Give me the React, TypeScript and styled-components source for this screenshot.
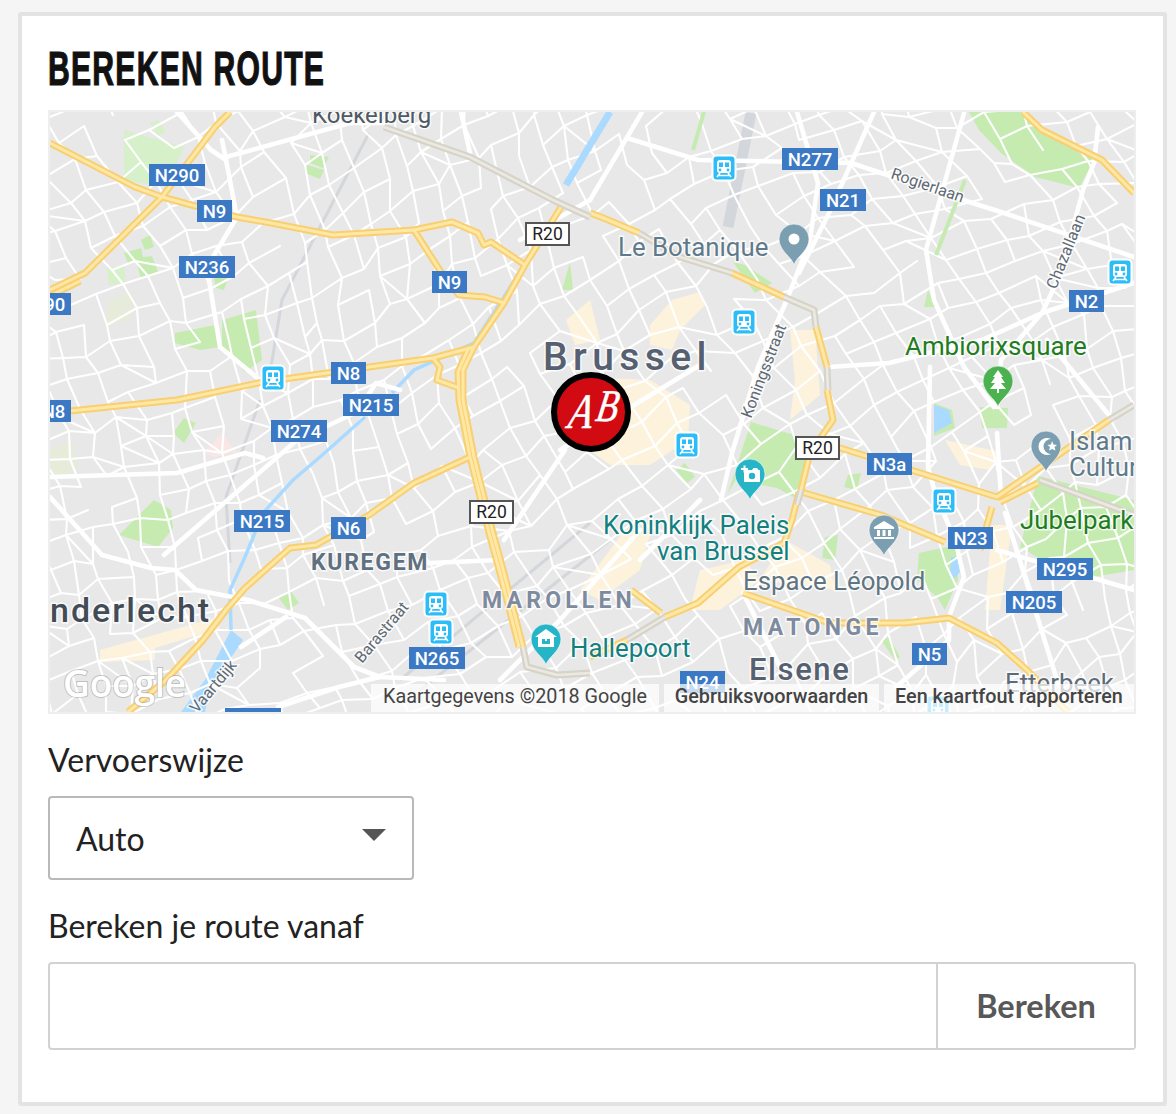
import React from "react";
import styled, { createGlobalStyle } from "styled-components";

const Global = createGlobalStyle`
  html, body { margin: 0; padding: 0; background: #f5f5f5; }
  body { font-family: Lato, "Liberation Sans", sans-serif; color: #222; }
`;

const Page = styled.div`
  width: 1176px;
  height: 1114px;
  padding: 12px 9px 8px 18px;
  box-sizing: border-box;
`;
const Card = styled.section`
  height: 1094px;
  box-sizing: border-box;
  background: #fff;
  border: 4px solid #e3e3e3;
  border-radius: 3px;
  padding: 0 27px 0 26px;
`;
const Title = styled.h2`
  margin: 0;
  height: 94px;
  box-sizing: border-box;
  padding-top: 24px;
  font-family: "Liberation Sans", sans-serif;
  font-weight: 700;
  font-size: 49px;
  line-height: 56px;
  letter-spacing: 2px;
  color: #111;
  -webkit-text-stroke: 1.2px #111;
  white-space: nowrap;
  transform: scaleX(0.615);
  transform-origin: left center;
`;
const MapFrame = styled.div`
  position: relative;
  width: 1088px;
  height: 604px;
  box-sizing: border-box;
  border: 2px solid #eee;
  overflow: hidden;
  background: #e8e8e8;
`;
const MapDrawing = styled.svg`
  display: block;
  width: 1084px;
  height: 600px;
`;
const Attribution = styled.div`
  position: absolute;
  right: 0;
  bottom: 0;
  display: flex;
  gap: 5px;
  height: 28px;
  font-family: Roboto, sans-serif;
  font-size: 19.8px;
  line-height: 26px;
  color: #444;
`;
const AttrItem = styled.span<{ $bold?: boolean; $w: number }>`
  width: ${(p) => p.$w}px;
  box-sizing: border-box;
  text-align: center;
  background: rgba(255, 255, 255, 0.72);
  font-weight: ${(p) => (p.$bold ? 500 : 400)};
  white-space: nowrap;
`;
const FieldLabel = styled.label`
  display: block;
  font-size: 32px;
  line-height: 36px;
  color: #222;
`;
const ModeLabel = styled(FieldLabel)`
  margin: 28px 0 18px;
`;
const FromLabel = styled(FieldLabel)`
  margin: 28px 0 18px;
`;
const SelectBox = styled.div`
  width: 366px;
  height: 84px;
  box-sizing: border-box;
  border: 2px solid #b9b9b9;
  border-radius: 4px;
  padding: 0 26px 0 26px;
  display: flex;
  align-items: center;
  justify-content: space-between;
  font-size: 32px;
  color: #222;
`;
const Caret = styled.span`
  width: 0;
  height: 0;
  margin-bottom: 6px;
  border-left: 12px solid transparent;
  border-right: 12px solid transparent;
  border-top: 12px solid #555;
`;
const InputGroup = styled.div`
  display: flex;
  width: 1088px;
  height: 88px;
  box-sizing: border-box;
  border: 2px solid #d2d2d2;
  border-radius: 4px;
`;
const RouteInput = styled.input`
  flex: 1;
  min-width: 0;
  border: 0;
  outline: 0;
  background: transparent;
`;
const RouteButton = styled.button`
  width: 198px;
  border: 0;
  border-left: 2px solid #d2d2d2;
  background: #fff;
  font-family: Lato, sans-serif;
  font-size: 32.5px;
  font-weight: 700;
  color: #585858;
  padding: 0;
  line-height: 84px;
`;

const Label = styled.text<{ $c: string; $s: number; $w?: number; $ls?: number }>`
  font-family: Roboto, sans-serif;
  fill: ${(p) => p.$c};
  font-size: ${(p) => p.$s}px;
  font-weight: ${(p) => p.$w ?? 400};
  letter-spacing: ${(p) => p.$ls ?? 0}px;
  stroke: rgba(255, 255, 255, 0.75);
  stroke-width: 3px;
  paint-order: stroke;
`;
const ShieldText = styled.text`
  font-family: Roboto, sans-serif;
  font-size: 18.5px;
  font-weight: 500;
  fill: #fff;
  text-anchor: middle;
`;
const RouteText = styled.text`
  font-family: Roboto, sans-serif;
  font-size: 17.5px;
  fill: #222;
  text-anchor: middle;
`;
const LogoText = styled.text`
  font-family: "Open Sans", sans-serif;
  font-size: 37px;
  font-weight: 600;
  fill: #fff;
  stroke: rgba(90, 90, 90, 0.3);
  stroke-width: 2px;
  paint-order: stroke;
  letter-spacing: -0.2px;
`;
const BadgeLetter = styled.text<{ $s: number }>`
  font-family: "Liberation Serif", serif;
  font-style: italic;
  font-size: ${(p) => p.$s}px;
  fill: #fff;
  stroke: #fff;
  stroke-width: 0.5px;
`;

type P = [number, number][];
const d = (p: P) => "M" + p.map((q) => q.join(" ")).join("L");

function buildStreets() {
  let s = 987654;
  const r = () => {
    s = (s * 16807) % 2147483647;
    return s / 2147483647;
  };
  const c = 27;
  const rot = -0.42;
  const ca = Math.cos(rot);
  const sa = Math.sin(rot);
  const nodes: [number, number][][] = [];
  for (let i = -22; i < 50; i++) {
    const row: [number, number][] = [];
    for (let j = -22; j < 50; j++) {
      const x0 = 590 + (i - 14) * c;
      const y0 = 410 + (j - 14) * c;
      const wx = x0 + 26 * Math.sin(y0 / 130 + x0 / 280);
      const wy = y0 + 26 * Math.sin(x0 / 150 - y0 / 380);
      const dx = wx - 590;
      const dy = wy - 410;
      row.push([
        Math.round(590 + dx * ca - dy * sa + (r() - 0.5) * 13),
        Math.round(410 + dx * sa + dy * ca + (r() - 0.5) * 13),
      ]);
    }
    nodes.push(row);
  }
  let out = "";
  const seg = (a: [number, number], b: [number, number]) => {
    const inside = (q: [number, number]) => q[0] > 20 && q[0] < 1160 && q[1] > 90 && q[1] < 740;
    if (inside(a) || inside(b)) out += `M${a[0]} ${a[1]}L${b[0]} ${b[1]}`;
  };
  for (let i = 0; i < nodes.length; i++) {
    for (let j = 0; j < nodes[i].length; j++) {
      if (i + 1 < nodes.length && r() < 0.84) seg(nodes[i][j], nodes[i + 1][j]);
      if (j + 1 < nodes[i].length && r() < 0.84) seg(nodes[i][j], nodes[i][j + 1]);
      if (i + 1 < nodes.length && j + 1 < nodes[i].length && r() < 0.08)
        seg(nodes[i][j], nodes[i + 1][j + 1]);
    }
  }
  return out;
}
const streets = buildStreets();

const beige: P[] = [
  [[600, 378], [650, 380], [690, 405], [688, 440], [650, 465], [610, 465], [590, 450]],
  [[650, 325], [672, 300], [700, 292], [705, 305], [680, 330], [672, 350], [650, 345]],
  [[566, 320], [590, 300], [600, 340], [575, 345]],
  [[625, 530], [650, 535], [640, 570], [600, 600], [580, 590]],
  [[700, 570], [745, 560], [760, 580], [720, 610], [690, 610]],
  [[790, 330], [815, 330], [820, 395], [790, 420], [795, 380]],
  [[945, 440], [1000, 452], [990, 470], [960, 465]],
  [[992, 525], [1012, 525], [1000, 610], [985, 610]],
  [[785, 540], [830, 565], [835, 590], [760, 580]],
  [[100, 650], [215, 618], [220, 628], [155, 648], [155, 660], [100, 662]],
];
const paleParks: P[] = [
  [[124, 130], [184, 147], [166, 187], [124, 180]],
  [[150, 123], [158, 120], [166, 132], [158, 136]],
  [[107, 267], [124, 267], [126, 283], [109, 285]],
];
const parks: P[] = [
  [[310, 155], [329, 157], [323, 168], [310, 163]],
  [[307, 165], [324, 170], [320, 179], [305, 173]],
  [[222, 320], [256, 310], [262, 360], [245, 372], [222, 347]],
  [[175, 333], [215, 325], [220, 347], [200, 350], [175, 343]],
  [[124, 253], [141, 248], [143, 257], [128, 263]],
  [[135, 258], [152, 256], [158, 272], [141, 278]],
  [[141, 240], [150, 235], [154, 247], [145, 250]],
  [[119, 535], [154, 500], [171, 510], [173, 528], [158, 547]],
  [[173, 433], [184, 418], [196, 423], [184, 443]],
  [[278, 597], [290, 590], [299, 603], [288, 610]],
  [[214, 278], [230, 272], [224, 290], [216, 288]],
  [[969, 112], [1023, 112], [1046, 133], [1094, 160], [1079, 188], [1035, 177], [1001, 153], [979, 130]],
  [[751, 422], [810, 440], [799, 500], [777, 488], [736, 480], [728, 493]],
  [[928, 290], [935, 307], [924, 307]],
  [[980, 407], [1008, 408], [1007, 428], [982, 428]],
  [[934, 403], [952, 410], [955, 428], [934, 436]],
  [[1038, 476], [1134, 500], [1134, 570], [1076, 580], [1020, 547]],
  [[919, 553], [956, 545], [958, 580], [945, 610], [937, 597], [917, 580]],
  [[825, 537], [838, 535], [835, 560], [822, 558]],
  [[881, 640], [889, 637], [900, 657], [895, 660]],
  [[848, 475], [861, 473], [857, 490], [844, 487]],
  [[676, 470], [685, 463], [695, 477], [687, 483]],
  [[562, 290], [570, 262], [573, 290]],
  [[733, 262], [745, 265], [772, 283], [755, 293]],
];
const greenStrips: P[] = [
  [[704, 112], [693, 150]],
  [[965, 180], [936, 255]],
];
const water: P[] = [
  [[231, 630], [243, 640], [211, 687], [205, 712], [181, 712], [205, 680]],
  [[934, 405], [949, 410], [952, 423], [934, 433]],
  [[951, 557], [957, 557], [960, 572], [955, 578], [950, 575]],
];
const canal: P[] = [
  [[610, 112], [566, 185]],
  [[525, 263], [504, 297], [474, 343], [414, 370], [392, 393]],
  [[365, 417], [320, 457], [293, 480], [263, 513], [245, 557], [230, 590], [231, 630]],
];
const rails: P[] = [
  [[369, 133], [282, 300], [271, 367]],
  [[260, 400], [226, 497], [230, 563]],
  [[751, 113], [728, 227]],
  [[400, 680], [590, 523]],
  [[420, 690], [610, 540]],
];
const major: P[] = [
  [[222, 140], [226, 160], [237, 217], [213, 257], [209, 280], [220, 347], [260, 380]],
  [[461, 112], [470, 153]],
  [[226, 157], [350, 123], [384, 123]],
  [[177, 112], [211, 150], [226, 160]],
  [[590, 200], [642, 112]],
  [[627, 138], [698, 160], [851, 163], [963, 200], [1004, 213], [1134, 257]],
  [[797, 112], [818, 183], [810, 240], [788, 297], [758, 367], [732, 453], [721, 500]],
  [[874, 112], [829, 213], [799, 273]],
  [[964, 113], [949, 167], [926, 250], [934, 300], [964, 367], [994, 407]],
  [[1098, 127], [1094, 163], [1083, 190], [1061, 273], [1042, 313], [1001, 360], [997, 407]],
  [[1134, 283], [1042, 313], [982, 340], [889, 363], [829, 367]],
  [[1047, 340], [1113, 420]],
  [[930, 367], [928, 467], [937, 500]],
  [[997, 433], [1001, 497]],
  [[937, 497], [956, 543], [964, 577], [949, 617], [949, 640], [919, 667], [896, 687]],
  [[1005, 513], [1057, 680], [1068, 712]],
  [[997, 550], [1134, 590]],
  [[743, 593], [780, 667]],
  [[50, 497], [102, 555], [151, 568], [175, 570], [196, 590], [248, 600], [305, 618], [354, 667], [380, 677], [444, 680]],
  [[164, 555], [297, 440], [357, 412], [376, 383], [400, 390]],
  [[50, 477], [177, 473], [245, 453], [263, 458]],
  [[241, 647], [286, 617]],
  [[429, 563], [500, 560]],
  [[565, 450], [504, 540]],
  [[278, 707], [339, 687], [380, 677]],
  [[590, 200], [520, 240]],
  [[640, 530], [560, 620], [500, 680]],
  [[700, 500], [640, 560]],
  [[560, 450], [700, 365]],
];
const yellow: P[] = [
  [[50, 143], [135, 187], [162, 197], [199, 207], [237, 217], [271, 223], [333, 235], [414, 230]],
  [[414, 230], [452, 222], [478, 233], [484, 245], [491, 242], [525, 265]],
  [[414, 230], [448, 283], [459, 295], [485, 297], [504, 303]],
  [[561, 207], [525, 265], [504, 303], [474, 347], [463, 370], [463, 400]],
  [[469, 347], [458, 372], [459, 400], [470, 457], [489, 533], [500, 573], [519, 647]],
  [[463, 400], [474, 457], [493, 533], [504, 573], [523, 647]],
  [[230, 112], [215, 127], [162, 197], [85, 273], [50, 290]],
  [[80, 281], [50, 296]],
  [[50, 413], [177, 400], [263, 382], [433, 358], [474, 347]],
  [[433, 358], [440, 367], [437, 380], [459, 388]],
  [[470, 457], [414, 483], [369, 515], [316, 545], [290, 548], [245, 588], [226, 610], [203, 640], [166, 680], [128, 712]],
  [[590, 213], [601, 217], [639, 233]],
  [[732, 273], [784, 297]],
  [[816, 327], [827, 367]],
  [[827, 390], [833, 420], [810, 453], [801, 490]],
  [[801, 492], [881, 515], [945, 542]],
  [[837, 447], [911, 470], [997, 497], [1109, 420]],
  [[1000, 502], [1038, 483]],
  [[799, 492], [792, 520], [784, 543], [739, 567], [698, 603], [665, 617]],
  [[631, 590], [661, 613]],
  [[627, 640], [590, 657]],
  [[743, 593], [829, 623], [904, 623], [949, 618], [997, 643], [1027, 670], [1068, 712]],
  [[1023, 112], [1042, 130], [1102, 160], [1134, 193]],
  [[992, 507], [980, 550]],
];
const tunnels: P[] = [
  [[384, 127], [470, 157], [553, 200], [590, 217]],
  [[639, 233], [680, 257], [732, 273]],
  [[784, 297], [814, 310], [816, 327]],
  [[827, 367], [828, 390]],
  [[801, 490], [797, 505]],
  [[665, 617], [627, 640]],
  [[1109, 420], [1134, 405]],
  [[523, 647], [527, 667], [557, 675], [590, 673]],
  [[1040, 480], [1134, 515]],
];
const shields: [number, number, number, string][] = [
  [149, 164, 56, "N290"], [197, 200, 35, "N9"], [179, 256, 56, "N236"],
  [15, 293, 56, "N290"], [432, 271, 35, "N9"], [331, 362, 35, "N8"],
  [343, 394, 56, "N215"], [271, 420, 56, "N274"], [36, 400, 35, "N8"],
  [234, 510, 56, "N215"], [331, 517, 35, "N6"], [409, 647, 56, "N265"],
  [782, 148, 56, "N277"], [820, 189, 46, "N21"], [1069, 290, 35, "N2"],
  [867, 453, 45, "N3a"], [948, 527, 45, "N23"], [1037, 558, 56, "N295"],
  [1006, 591, 56, "N205"], [912, 643, 35, "N5"], [680, 671, 45, "N24"],
  [225, 708, 56, ""],
];
const routes: [number, number][] = [[525, 222], [795, 436], [469, 500]];
const trains: [number, number][] = [
  [273, 378], [724, 168], [744, 322], [1120, 272], [687, 445],
  [944, 501], [436, 604], [441, 632], [938, 708],
];

const Train = ({ x, y }: { x: number; y: number }) => (
  <g transform={`translate(${x} ${y})`}>
    <rect x={-11.5} y={-12.5} width={23} height={25} rx={4} fill="#2bbdf7" stroke="#fff" strokeWidth={2} />
    <rect x={-7} y={-8} width={14} height={13} rx={3} fill="#fff" />
    <rect x={-5} y={-5.5} width={4} height={4.5} fill="#2bbdf7" />
    <rect x={1} y={-5.5} width={4} height={4.5} fill="#2bbdf7" />
    <circle cx={-4} cy={2} r={1.4} fill="#2bbdf7" />
    <circle cx={4} cy={2} r={1.4} fill="#2bbdf7" />
    <path d="M-4 5L-7 9M4 5L7 9M-5.5 7.5H5.5" stroke="#fff" strokeWidth={1.6} fill="none" />
  </g>
);

const Pin = ({ x, y, fill, children }: { x: number; y: number; fill: string; children?: React.ReactNode }) => (
  <g transform={`translate(${x} ${y})`}>
    <path
      d="M0 26C-2 18-15 12-15 0A15 15 0 1 1 15 0C15 12 2 18 0 26Z"
      fill={fill}
      stroke="rgba(255,255,255,.6)"
      strokeWidth={1}
    />
    {children}
  </g>
);

const slate = "#7b9fb1";
const teal = "#26b4c7";

function BrusselsMap() {
  return (
    <MapDrawing viewBox="50 112 1084 600">
      <rect x={50} y={112} width={1084} height={600} fill="#e8e8e8" />
      {beige.map((p, i) => <path key={i} d={d(p) + "Z"} fill="#fdf3dd" />)}
      <path d="M203 453L222 433L237 452L215 457Z" fill="#f8e7e5" />
      <path d="M50 450L72 440L78 470L50 480ZM110 300L135 290L130 320L105 325Z" fill="#e6ecd9" />
      {paleParks.map((p, i) => <path key={i} d={d(p) + "Z"} fill="#d6f0c9" />)}
      {parks.map((p, i) => <path key={i} d={d(p) + "Z"} fill="#c5ebb1" />)}
      {water.map((p, i) => <path key={i} d={d(p) + "Z"} fill="#aadaff" />)}
      {rails.map((p, i) => <path key={i} d={d(p)} fill="none" stroke="#d3d6da" strokeWidth={i === 2 ? 11 : 3} />)}
      <path d={streets} fill="none" stroke="#fff" strokeWidth={2.1} strokeLinecap="round" />
      {greenStrips.map((p, i) => <path key={i} d={d(p)} fill="none" stroke="#c5ebb1" strokeWidth={4} />)}
      {canal.map((p, i) => <path key={i} d={d(p)} fill="none" stroke="#aadaff" strokeWidth={i === 0 ? 7 : 3.5} />)}
      {major.map((p, i) => <path key={i} d={d(p)} fill="none" stroke="#fff" strokeWidth={4.6} strokeLinejoin="round" strokeLinecap="round" />)}
      {yellow.map((p, i) => <path key={i} d={d(p)} fill="none" stroke="#f8cf73" strokeWidth={7} strokeLinejoin="round" />)}
      {yellow.map((p, i) => <path key={i} d={d(p)} fill="none" stroke="#fee8a3" strokeWidth={3} strokeLinejoin="round" />)}
      {tunnels.map((p, i) => <path key={i} d={d(p)} fill="none" stroke="#d6d3c8" strokeWidth={7} strokeLinejoin="round" />)}
      {tunnels.map((p, i) => <path key={i} d={d(p)} fill="none" stroke="#ebe9e2" strokeWidth={2.6} strokeLinejoin="round" />)}

      <Label x={312} y={123} $c="#4f5a64" $s={24}>Koekelberg</Label>
      <Label x={618} y={256} $c="#5f7b8b" $s={25.8}>Le Botanique</Label>
      <Label x={543} y={370} $c="#566070" $s={39} $w={500} $ls={5.4}>Brussel</Label>
      <Label x={905} y={355} $c="#1f7d1f" $s={25.9}>Ambiorixsquare</Label>
      <Label x={1069} y={450} $c="#5f7b8b" $s={25.8}>Islam</Label>
      <Label x={1069} y={476} $c="#5f7b8b" $s={25.8}>Cultur</Label>
      <Label x={603} y={534} $c="#11807f" $s={25.8}>Koninklijk Paleis</Label>
      <Label x={657} y={560} $c="#11807f" $s={25.8}>van Brussel</Label>
      <Label x={570} y={657} $c="#11807f" $s={25.8}>Hallepoort</Label>
      <Label x={743} y={590} $c="#607582" $s={25.8}>Espace Léopold</Label>
      <Label x={1020} y={529} $c="#1f7d1f" $s={25.8}>Jubelpark</Label>
      <Label x={743} y={635} $c="#7e8b9f" $s={23} $w={700} $ls={4.4}>MATONGE</Label>
      <Label x={482} y={608} $c="#7e8b9f" $s={23} $w={700} $ls={4.2}>MAROLLEN</Label>
      <Label x={311} y={570} $c="#5f7080" $s={23} $w={700} $ls={1.7}>KUREGEM</Label>
      <Label x={749} y={680} $c="#566170" $s={31} $w={500} $ls={1.6}>Elsene</Label>
      <Label x={1005} y={692} $c="#5d6a78" $s={25.8}>Etterbeek</Label>
      <Label x={50} y={622} $c="#434c56" $s={34} $w={500} $ls={2}>nderlecht</Label>
      <Label x={890} y={178} $c="#606a75" $s={16} transform="rotate(19 890 178)">Rogierlaan</Label>
      <Label x={1056} y={290} $c="#606a75" $s={16} transform="rotate(-68 1056 290)">Chazallaan</Label>
      <Label x={751} y={419} $c="#606a75" $s={16} transform="rotate(-69 751 419)">Koningsstraat</Label>
      <Label x={362} y={664} $c="#606a75" $s={16} transform="rotate(-50 362 664)">Barastraat</Label>
      <Label x={197} y={714} $c="#606a75" $s={16} transform="rotate(-50 197 714)">Vaartdijk</Label>
      <LogoText x={63} y={697}>Google</LogoText>

      {shields.map(([x, y, w, t], i) => (
        <g key={i}>
          <rect x={x} y={y} width={w} height={22} fill="#3b79c4" />
          <ShieldText x={x + w / 2} y={y + 17.5}>{t}</ShieldText>
        </g>
      ))}
      {routes.map(([x, y], i) => (
        <g key={i}>
          <rect x={x + 1} y={y + 1} width={43} height={22} fill="#fff" stroke="#555" strokeWidth={2} />
          <RouteText x={x + 22.5} y={y + 18}>R20</RouteText>
        </g>
      ))}
      {trains.map(([x, y], i) => <Train key={i} x={x} y={y} />)}

      <Pin x={794} y={239} fill={slate}><circle r={5.5} fill="#fff" /></Pin>
      <Pin x={998} y={381} fill="#4cb14f">
        <path d="M0-11L5-4H3L7 2H3L8 8H1V12H-1V8H-8L-3 2H-7L-3-4H-5Z" fill="#fff" />
      </Pin>
      <Pin x={1046} y={446} fill={slate}>
        <path d="M5-7A8.5 8.5 0 1 0 5 8A6.5 6.5 0 1 1 5-7Z" fill="#fff" />
        <path d="M6-5L7.5-1.5L11-1L8.5 1L9.5 4.5L6 3L3 4.5L4 1L1.5-1L5-1.5Z" fill="#fff" />
      </Pin>
      <Pin x={750} y={474} fill={teal}>
        <path d="M-2-4H2L3.5-6H7L8.5-4H10V8H-6V-4Z" fill="#fff" />
        <circle cx={2} cy={2} r={3.2} fill={teal} />
        <path d="M-9-5H-2M-5.5-8.5V-1.5" stroke="#fff" strokeWidth={2} />
      </Pin>
      <Pin x={884} y={530} fill={slate}>
        <path d="M-10-3L0-9L10-3V-1H-10ZM-7 0H-4V6H-7ZM-1.5 0H1.5V6H-1.5ZM4 0H7V6H4ZM-10 7H10V9H-10Z" fill="#fff" />
      </Pin>
      <Pin x={546} y={639} fill={teal}>
        <path d="M0-10L11-2H8V8H-8V-2H-11Z" fill="#fff" />
        <path d="M-4 0H-1V2H1V0H4V5H-4Z" fill={teal} />
      </Pin>

      <circle cx={591} cy={412} r={37} fill="#d20a12" stroke="#000" strokeWidth={6} />
      <g transform="translate(591 412) skewX(-10) scale(0.85 1.08) translate(-591 -412)">
        <BadgeLetter x={566} y={427} $s={46}>A</BadgeLetter>
        <BadgeLetter x={597} y={420} $s={42}>B</BadgeLetter>
      </g>
    </MapDrawing>
  );
}

export default function App() {
  return (
    <>
      <Global />
      <Page>
        <Card>
          <Title>BEREKEN ROUTE</Title>
          <MapFrame>
            <BrusselsMap />
            <Attribution>
              <AttrItem $w={288}>Kaartgegevens ©2018 Google</AttrItem>
              <AttrItem $w={215} $bold>Gebruiksvoorwaarden</AttrItem>
              <AttrItem $w={250} $bold>Een kaartfout rapporteren</AttrItem>
            </Attribution>
          </MapFrame>
          <ModeLabel>Vervoerswijze</ModeLabel>
          <SelectBox>
            Auto
            <Caret />
          </SelectBox>
          <FromLabel>Bereken je route vanaf</FromLabel>
          <InputGroup>
            <RouteInput aria-label="Bereken je route vanaf" />
            <RouteButton>Bereken</RouteButton>
          </InputGroup>
        </Card>
      </Page>
    </>
  );
}
